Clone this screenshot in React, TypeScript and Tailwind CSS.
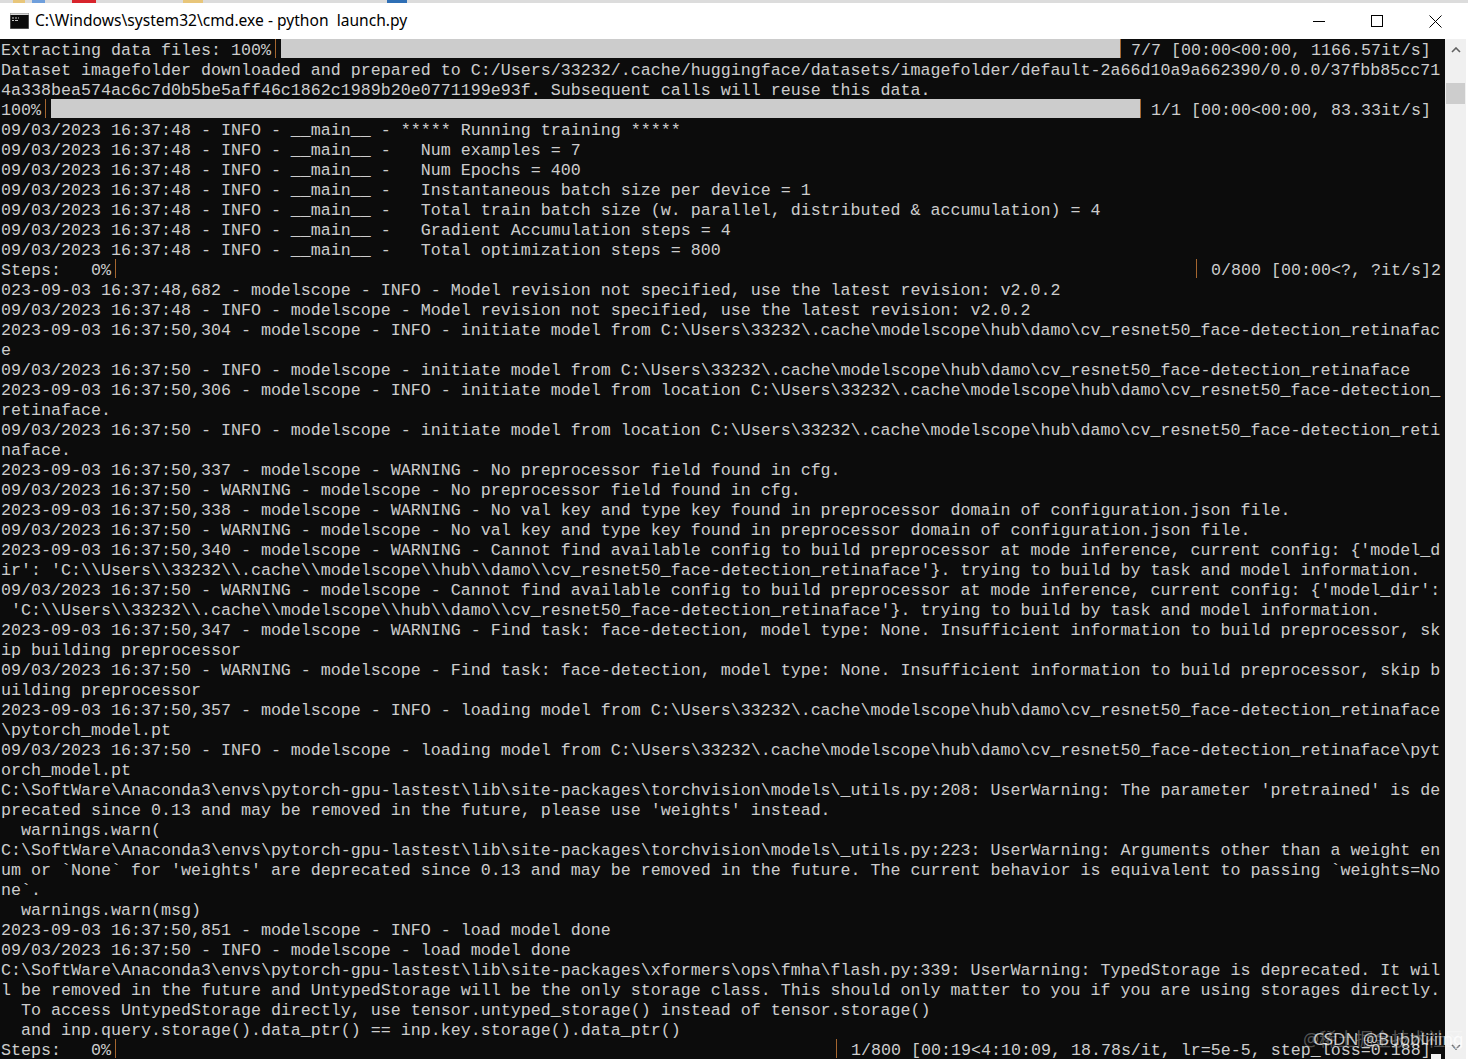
import React from "react";

const B = "\\";

// log rows, wrapped at 144 columns like the console does
const MAIN = "09/03/2023 16:37:48 - INFO - __main__ - ";
const CACHE = String.raw`C:\Users\33232\.cache\modelscope\hub\damo\cv_resnet50_face-detection_`;
const DOUBLE = String.raw`'C:\\Users\\33232\\.cache\\modelscope\\hub\\damo\\cv_resnet50_face-detection_retinaface'}. trying to build by task and model information.`;
const SITE = String.raw`C:\SoftWare\Anaconda3\envs\pytorch-gpu-lastest\lib\site-packages`;

const topLines = [
	"Dataset imagefolder downloaded and prepared to C:/Users/33232/.cache/huggingface/datasets/imagefolder/default-2a66d10a9a662390/0.0.0/37fbb85cc71",
	"4a338bea574ac6c7d0b5be5aff46c1862c1989b20e0771199e93f. Subsequent calls will reuse this data.",
];

const mainLines = [
	MAIN + "***** Running training *****",
	MAIN + "  Num examples = 7",
	MAIN + "  Num Epochs = 400",
	MAIN + "  Instantaneous batch size per device = 1",
	MAIN + "  Total train batch size (w. parallel, distributed & accumulation) = 4",
	MAIN + "  Gradient Accumulation steps = 4",
	MAIN + "  Total optimization steps = 800",
];

const logLines = [
	"023-09-03 16:37:48,682 - modelscope - INFO - Model revision not specified, use the latest revision: v2.0.2",
	"09/03/2023 16:37:48 - INFO - modelscope - Model revision not specified, use the latest revision: v2.0.2",
	"2023-09-03 16:37:50,304 - modelscope - INFO - initiate model from " + CACHE + "retinafac",
	"e",
	"09/03/2023 16:37:50 - INFO - modelscope - initiate model from " + CACHE + "retinaface",
	"2023-09-03 16:37:50,306 - modelscope - INFO - initiate model from location " + CACHE,
	"retinaface.",
	"09/03/2023 16:37:50 - INFO - modelscope - initiate model from location " + CACHE + "reti",
	"naface.",
	"2023-09-03 16:37:50,337 - modelscope - WARNING - No preprocessor field found in cfg.",
	"09/03/2023 16:37:50 - WARNING - modelscope - No preprocessor field found in cfg.",
	"2023-09-03 16:37:50,338 - modelscope - WARNING - No val key and type key found in preprocessor domain of configuration.json file.",
	"09/03/2023 16:37:50 - WARNING - modelscope - No val key and type key found in preprocessor domain of configuration.json file.",
	"2023-09-03 16:37:50,340 - modelscope - WARNING - Cannot find available config to build preprocessor at mode inference, current config: {'model_d",
	"ir': " + DOUBLE,
	"09/03/2023 16:37:50 - WARNING - modelscope - Cannot find available config to build preprocessor at mode inference, current config: {'model_dir':",
	" " + DOUBLE,
	"2023-09-03 16:37:50,347 - modelscope - WARNING - Find task: face-detection, model type: None. Insufficient information to build preprocessor, sk",
	"ip building preprocessor",
	"09/03/2023 16:37:50 - WARNING - modelscope - Find task: face-detection, model type: None. Insufficient information to build preprocessor, skip b",
	"uilding preprocessor",
	"2023-09-03 16:37:50,357 - modelscope - INFO - loading model from " + CACHE + "retinaface",
	B + "pytorch_model.pt",
	"09/03/2023 16:37:50 - INFO - modelscope - loading model from " + CACHE + "retinaface" + B + "pyt",
	"orch_model.pt",
	SITE + String.raw`\torchvision\models\_utils.py:208: UserWarning: The parameter 'pretrained' is de`,
	"precated since 0.13 and may be removed in the future, please use 'weights' instead.",
	"  warnings.warn(",
	SITE + String.raw`\torchvision\models\_utils.py:223: UserWarning: Arguments other than a weight en`,
	"um or `None` for 'weights' are deprecated since 0.13 and may be removed in the future. The current behavior is equivalent to passing `weights=No",
	"ne`.",
	"  warnings.warn(msg)",
	"2023-09-03 16:37:50,851 - modelscope - INFO - load model done",
	"09/03/2023 16:37:50 - INFO - modelscope - load model done",
	SITE + String.raw`\xformers\ops\fmha\flash.py:339: UserWarning: TypedStorage is deprecated. It wil`,
	"l be removed in the future and UntypedStorage will be the only storage class. This should only matter to you if you are using storages directly.",
	"  To access UntypedStorage directly, use tensor.untyped_storage() instead of tensor.storage()",
	"  and inp.query.storage().data_ptr() == inp.key.storage().data_ptr()",
];

function Row({children}: {children: React.ReactNode}) {
	return <div className="h-5 whitespace-pre">{children}</div>;
}

// tqdm bar: label, thin tick, filled part, tick, stats
function ProgressRow({label, labelWidth, fill, gap, stats}: {
	label: string; labelWidth: string; fill: string; gap: string; stats: string;
}) {
	return (
		<div className="flex h-5 whitespace-pre">
			<span className={labelWidth}>{label}</span>
			<span className="h-[19px] w-px bg-[#a5662f]" />
			<span className={fill} />
			<span className="h-[19px] w-px bg-[#a5662f]" />
			<span className={gap} />
			<span>{stats}</span>
		</div>
	);
}

function ConsoleIcon() {
	return (
		<svg width="19" height="16" viewBox="0 0 19 16" className="shrink-0">
			<rect x="0" y="0" width="19" height="16" fill="#8a8a8a" />
			<rect x="0.5" y="2" width="18" height="13.5" fill="#0a0a0a" />
			<rect x="0.5" y="0.5" width="18" height="1.5" fill="#d8d8d8" />
			<path d="M2 4.5h2v1H2zM5 4.5h2v1H5zM8 4.5h1v1H8zM2 7h2v1H2zM5 7h3v1H5z" fill="#c8c8c8" />
		</svg>
	);
}

export default function App() {
	return (
		<div className="relative h-[1059px] w-[1468px] overflow-hidden bg-white font-['Liberation_Mono',monospace]">
			{/* strip of the desktop behind the window */}
			<div className="flex h-[3px] bg-[#dcdcdc]">
				<div className="ml-[13px] w-[12px] bg-[#e8c67a]" />
				<div className="ml-[7px] w-[13px] bg-[#6f9fdc]" />
				<div className="ml-[27px] w-[24px] bg-[#d8242c]" />
				<div className="ml-[87px] w-[20px] bg-[#e8c67a]" />
				<div className="ml-[184px] w-[20px] bg-[#2f6fb5]" />
			</div>
			{/* title bar */}
			<div className="flex h-[36px] items-center pr-[26px] pl-[10px]">
				<ConsoleIcon />
				<span className="ml-[6px] flex-1 whitespace-pre font-['Noto_Sans',sans-serif] text-[15.6px] text-black">
					C:\Windows\system32\cmd.exe - python  launch.py
				</span>
				<svg width="12" height="12" viewBox="0 0 12 12" className="mr-[46px]">
					<path d="M0 6.5h12" stroke="#000" strokeWidth="1" />
				</svg>
				<svg width="12" height="12" viewBox="0 0 12 12" className="mr-[46px]">
					<rect x="0.5" y="0.5" width="11" height="11" fill="none" stroke="#000" />
				</svg>
				<svg width="13" height="13" viewBox="0 0 13 13">
					<path d="M0.5 0.5l12 12M12.5 0.5l-12 12" stroke="#000" strokeWidth="1" />
				</svg>
			</div>
			<div className="flex h-[1020px]">
				{/* console output */}
				<div className="w-[1445px] overflow-hidden bg-[#0c0c0c] pl-px text-[16.667px] leading-6 text-[#cccccc]">
					<ProgressRow
						label="Extracting data files: 100%"
						labelWidth="w-[274px]"
						fill="ml-[5px] h-[19px] w-[839px] bg-[#cccccc]"
						gap="w-[10px]"
						stats="7/7 [00:00<00:00, 1166.57it/s]"
					/>
					{topLines.map((line) => <Row key={line}>{line}</Row>)}
					<ProgressRow
						label="100%"
						labelWidth="w-[44px]"
						fill="ml-[5px] h-[19px] w-[1089px] bg-[#cccccc]"
						gap="w-[10px]"
						stats="1/1 [00:00<00:00, 83.33it/s]"
					/>
					{mainLines.map((line) => <Row key={line}>{line}</Row>)}
					<ProgressRow
						label="Steps:   0%"
						labelWidth="w-[114px]"
						fill="h-5 w-[1080px]"
						gap="w-[14px]"
						stats="0/800 [00:00<?, ?it/s]2"
					/>
					{logLines.map((line, i) => <Row key={i}>{line}</Row>)}
					<ProgressRow
						label="Steps:   0%"
						labelWidth="w-[114px]"
						fill="h-5 w-[720px]"
						gap="w-[14px]"
						stats="1/800 [00:19<4:10:09, 18.78s/it, lr=5e-5, step_loss=0.188]"
					/>
				</div>
				{/* scrollbar */}
				<div className="flex w-[21px] flex-col items-center justify-between bg-[#f0f0f0] pt-2 pb-[9px]">
					<div className="flex flex-col items-center">
						<svg width="10" height="6" viewBox="0 0 10 6">
							<path d="M1 5l4-4 4 4" fill="none" stroke="#606060" strokeWidth="1.6" />
						</svg>
						<div className="mt-[30px] h-[21px] w-[19px] bg-[#cdcdcd]" />
					</div>
					<svg width="10" height="6" viewBox="0 0 10 6">
						<path d="M1 1l4 4 4-4" fill="none" stroke="#606060" strokeWidth="1.6" />
					</svg>
				</div>
			</div>
			{/* cursor */}
			<div className="absolute top-[1054px] left-[1431px] h-[5px] w-[10px] bg-[#f2f2f2]" />
			{/* watermarks */}
			<div className="absolute top-[1027px] left-[1303px] whitespace-pre font-['Noto_Sans','Noto_Sans_CJK_SC',sans-serif] text-[18px] leading-6 text-white/30">
				@稀土掘金技术社区
			</div>
			<div className="absolute top-[1027px] left-[1313px] whitespace-pre font-['Noto_Sans',sans-serif] text-[17px] leading-6 text-white/75">
				CSDN @Bubbliiiing
			</div>
		</div>
	);
}
